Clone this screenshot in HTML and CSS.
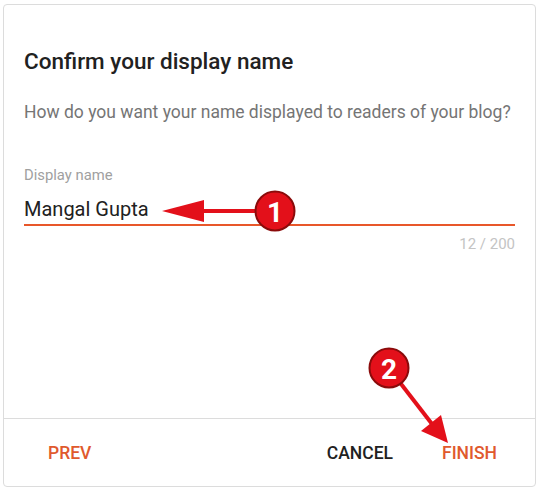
FILE: index.html
```html
<!DOCTYPE html>
<html>
<head>
<meta charset="utf-8">
<link rel="stylesheet" href="styles.css">
</head>
<body>
<div class="card">
  <div class="content">
    <h1 class="title">Confirm your display name</h1>
    <p class="subtitle">How do you want your name displayed to readers of your blog?</p>
    <div class="field">
      <div class="label">Display name</div>
      <div class="input">Mangal Gupta</div>
      <div class="counter">12 / 200</div>
    </div>
  </div>
  <div class="footer">
    <span class="btn accent">PREV</span>
    <span class="spacer"></span>
    <span class="btn">CANCEL</span>
    <span class="btn accent">FINISH</span>
  </div>
  <svg class="overlay" width="540" height="492" viewBox="0 0 540 492">
    <g fill="#e3101a" stroke="none">
      <rect x="198" y="209" width="62" height="4"/>
      <polygon points="162,211 204,200 204,222"/>
      <line x1="398" y1="380" x2="432" y2="424" stroke="#e3101a" stroke-width="4"/>
      <polygon points="448,443 421,431 441,415"/>
    </g>
    <circle cx="275" cy="211" r="19.5" fill="#e3101a" stroke="#8a0b0b" stroke-width="2"/>
    <circle cx="389" cy="368" r="19.5" fill="#e3101a" stroke="#8a0b0b" stroke-width="2"/>
    <text x="275" y="222" class="num" text-anchor="middle">1</text>
    <text x="389" y="379" class="num" text-anchor="middle">2</text>
  </svg>
</div>
</body>
</html>
```

FILE: styles.css
```css
html, body {
  margin: 0;
  padding: 0;
  background: #fff;
}
body {
  width: 540px;
  height: 492px;
  overflow: hidden;
  font-family: Roboto, "Liberation Sans", sans-serif;
}
.card {
  position: relative;
  box-sizing: border-box;
  margin: 4px 4px 0 3px;
  width: 533px;
  height: 483px;
  border: 1px solid #dcdcdc;
  border-radius: 4px;
  display: flex;
  flex-direction: column;
}
.content {
  flex: 1;
  padding: 0 20px 0 20px;
}
.title {
  margin: 42px 0 0 0;
  font-size: 22.5px;
  font-weight: 500;
  line-height: 28px;
  color: #212121;
}
.subtitle {
  margin: 25px 0 0 0;
  font-size: 17.5px;
  font-weight: 400;
  line-height: 24px;
  color: #757575;
}
.field {
  margin-top: 42px;
}
.label {
  font-size: 14.8px;
  line-height: 18px;
  color: #a0a0a0;
}
.input {
  margin-top: 12px;
  font-size: 20px;
  line-height: 26px;
  color: #212121;
  padding-bottom: 2px;
  border-bottom: 2px solid #e8572a;
}
.counter {
  margin-top: 9px;
  text-align: right;
  font-size: 15px;
  line-height: 18px;
  color: #c4c4c4;
}
.footer {
  height: 67px;
  border-top: 1px solid #dcdcdc;
  display: flex;
  align-items: center;
  padding: 0 13px 0 20px;
}
.spacer {
  flex: 1;
}
.btn {
  font-size: 17.5px;
  font-weight: 500;
  color: #212121;
  padding: 0 25px 0 24px;
  line-height: 36px;
}
.btn.accent {
  color: #e0592d;
}
.overlay {
  position: absolute;
  left: -4px;
  top: -5px;
  pointer-events: none;
}
.num {
  font-family: Roboto, "Liberation Sans", sans-serif;
  font-size: 28px;
  font-weight: 700;
  fill: #fff;
}
```
